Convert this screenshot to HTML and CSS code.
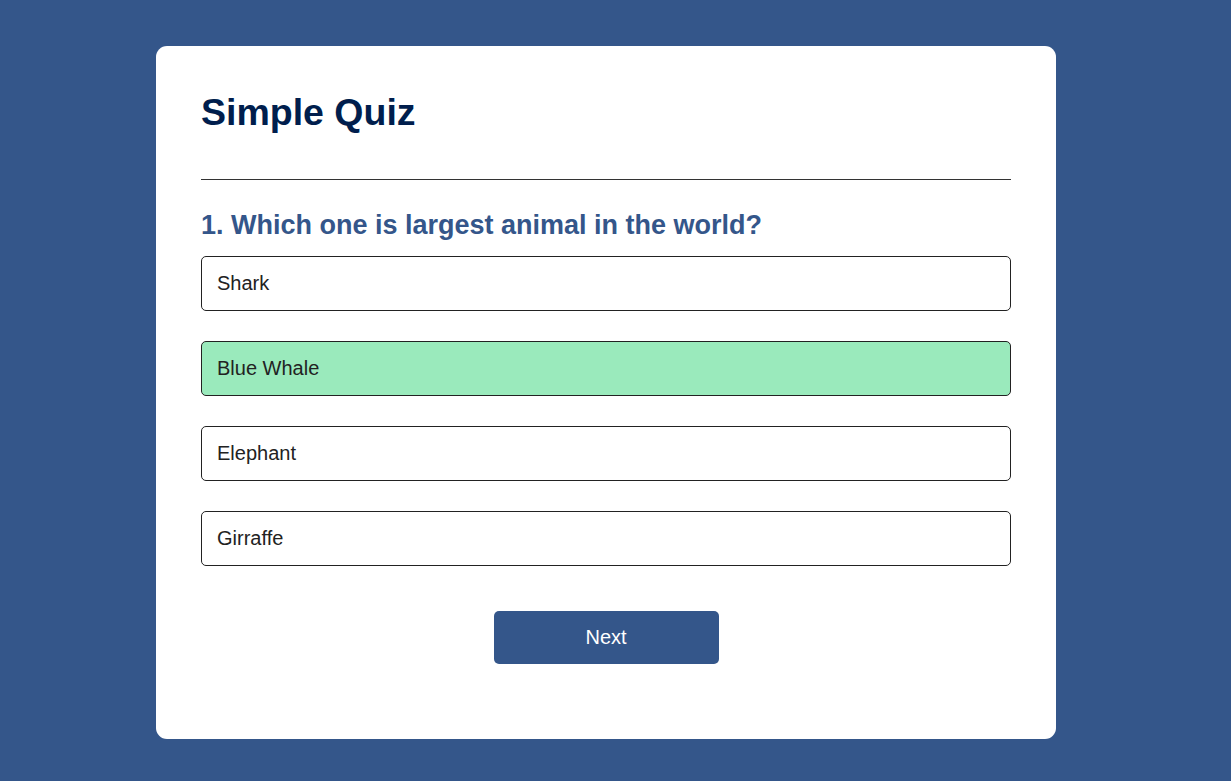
FILE: index.html
```html
<!DOCTYPE html>
<html lang="en">
<head>
<meta charset="utf-8">
<title>Simple Quiz</title>
<link rel="stylesheet" href="styles.css">
</head>
<body>
<div class="app">
  <h1 class="title">Simple Quiz</h1>
  <div class="quiz">
    <h2 class="question">1. Which one is largest animal in the world?</h2>
    <div class="answers">
      <button class="btn">Shark</button>
      <button class="btn correct">Blue Whale</button>
      <button class="btn">Elephant</button>
      <button class="btn">Girraffe</button>
    </div>
    <button class="next-btn">Next</button>
  </div>
</div>
</body>
</html>
```
FILE: styles.css
```css
* {
  margin: 0;
  padding: 0;
  box-sizing: border-box;
}
body {
  background: #34568a;
  font-family: "Liberation Sans", Arial, sans-serif;
  padding-top: 46px;
  height: 781px;
}
.app {
  background: #fff;
  width: 900px;
  margin: 0 0 0 156px;
  border-radius: 11px;
  padding: 45px 45px 75px;
}
.title {
  color: #001e4d;
  font-size: 37.5px;
  font-weight: 700;
  line-height: 41px;
  padding-top: 1px;
  padding-bottom: 46px;
  border-bottom: 1px solid #333;
}
.question {
  color: #34568a;
  font-size: 27px;
  font-weight: 700;
  line-height: 29px;
  margin-top: 31px;
}
.answers {
  display: flex;
  flex-direction: column;
  gap: 30px;
  margin-top: 16px;
}
.btn {
  display: block;
  width: 100%;
  height: 55px;
  background: #fff;
  color: #222;
  font-family: inherit;
  font-size: 20px;
  text-align: left;
  padding: 0 15px;
  border: 1px solid #222;
  border-radius: 5px;
}
.btn.correct {
  background: #9aeabc;
}
.next-btn {
  display: block;
  width: 225px;
  height: 53px;
  margin: 45px auto 0;
  background: #34568a;
  color: #fff;
  font-family: inherit;
  font-size: 20px;
  border: 0;
  border-radius: 5px;
}
```
